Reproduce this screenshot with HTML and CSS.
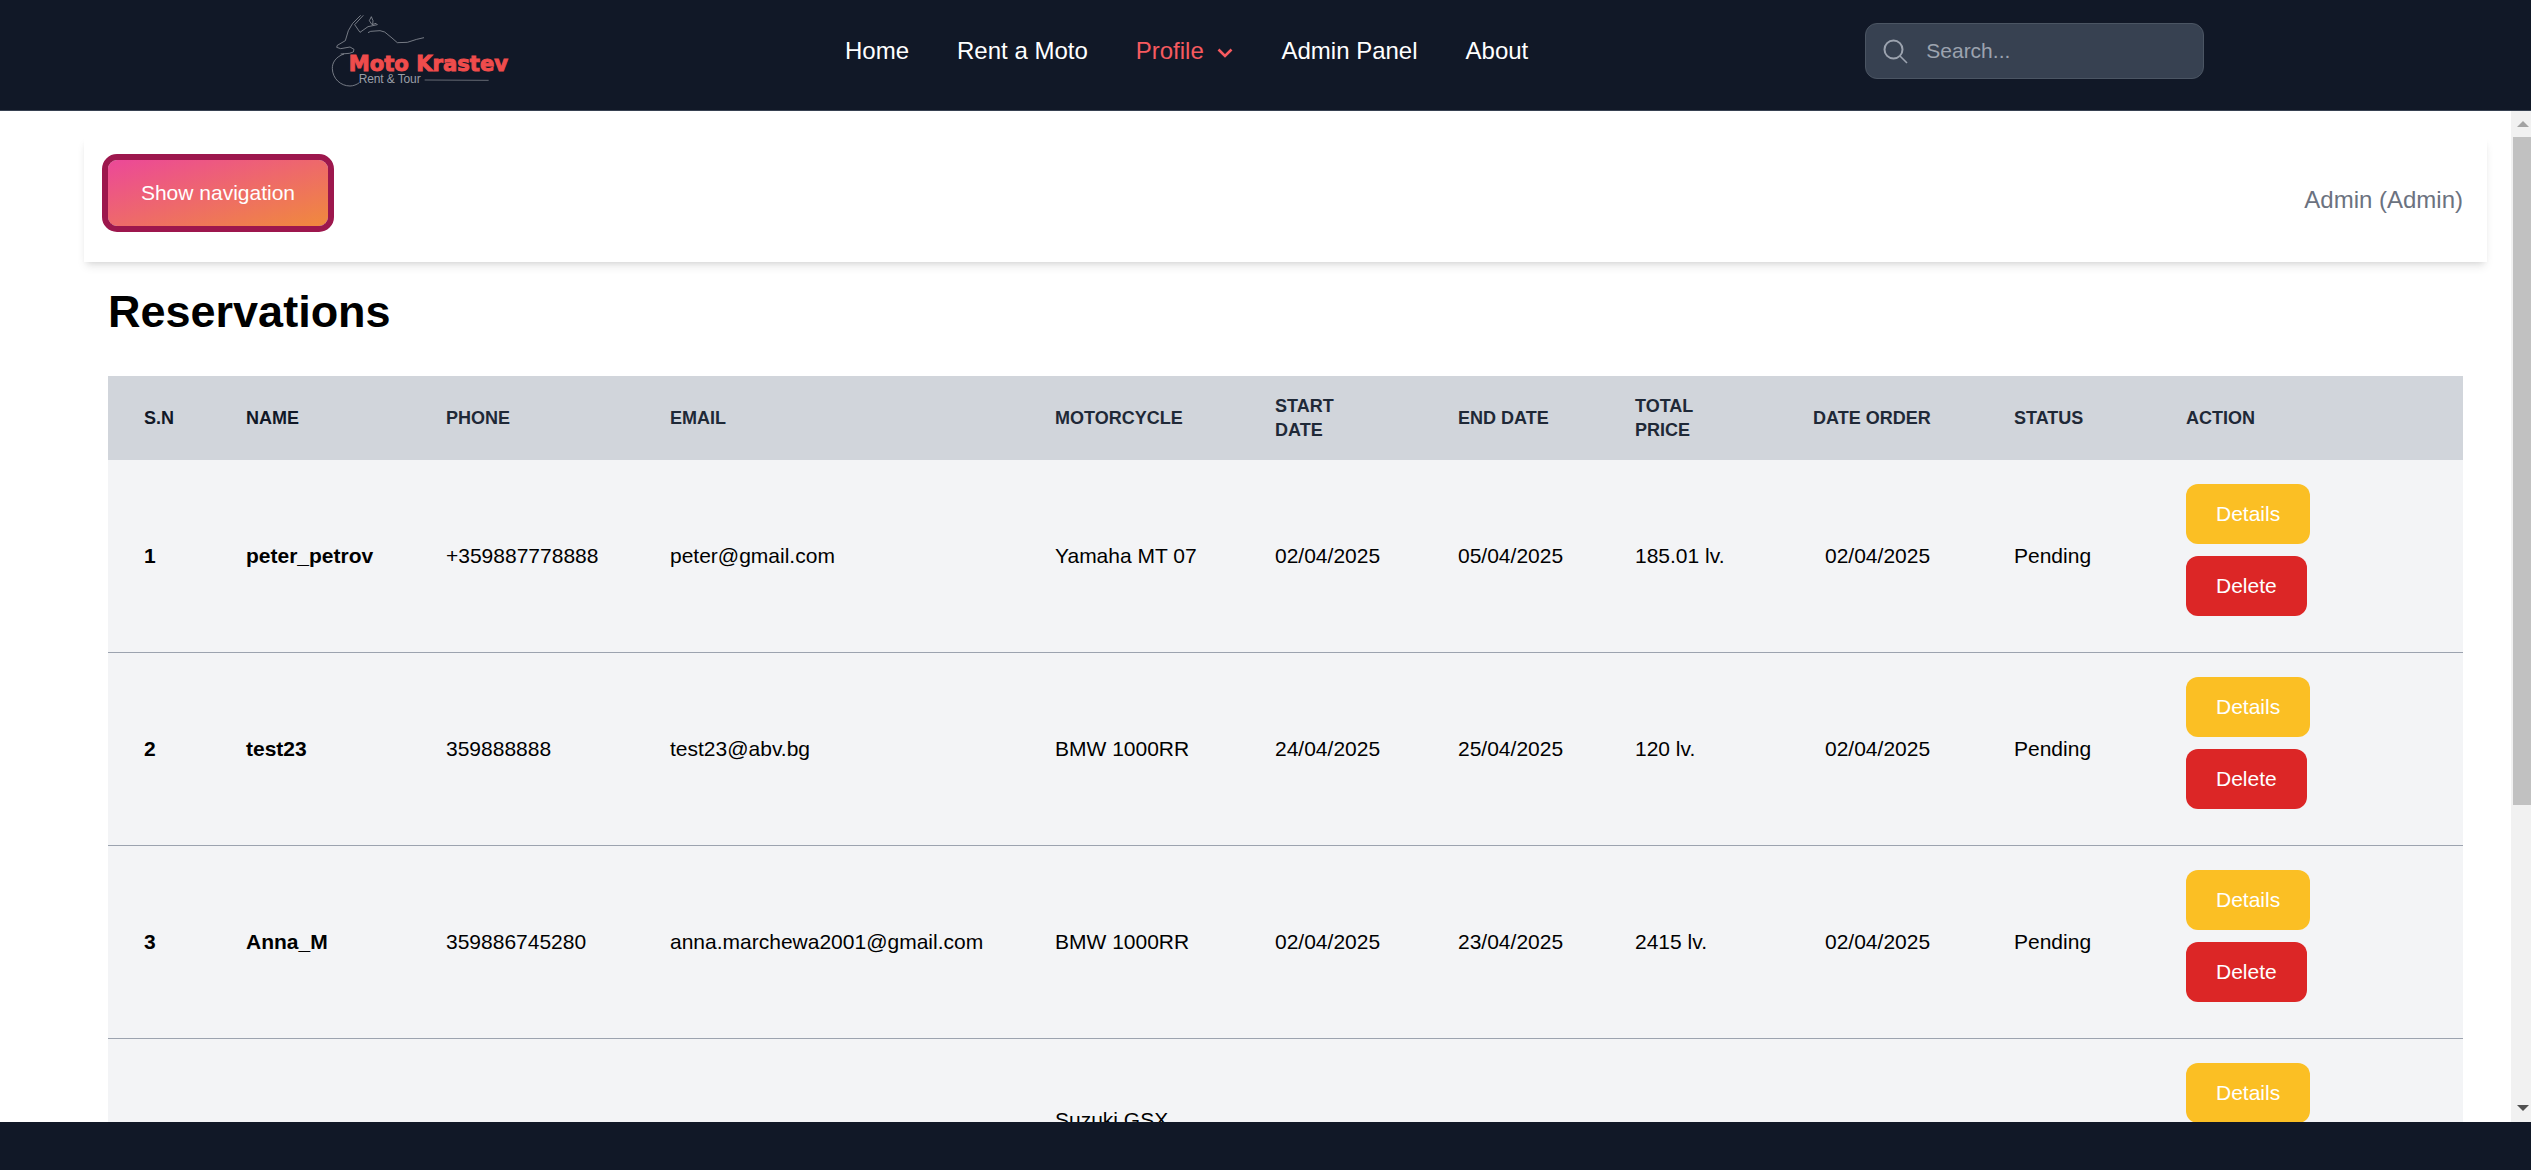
FILE: index.html
```html
<!DOCTYPE html>
<html>
<head>
    <meta charset="utf-8" />
    <title>Moto Krastev - Reservations</title>
    <link rel="stylesheet" href="styles.css">
</head>
<body class="page">
    <header class="topbar">
        <a class="logo" href="#">
            <svg class="logo-img" viewBox="0 0 780 330" width="260" height="110">
                <g fill="none" stroke="#9a9ea6" stroke-width="2.2">
                    <path d="M182 46 L158 70 L145 92 L136 122 L112 136 L110 142 L122 146 L150 141 L162 148 L160 156 L148 160 L122 162" />
                    <path d="M190 46 L164 74 L180 97 L204 80 L232 74 L228 70 L216 74 L208 62 L214 50 L219 62 L218 72" />
                    <path d="M204 98 L212 94 L240 92 L254 96 L276 114 L292 128 L322 127 L350 118 L372 113" />
                    <path d="M132 162 C108 170 96 188 97 206 C98 236 122 258 150 258 C160 258 170 254 178 248" />
                    <path d="M374 240 L566 241" stroke="#84878e" />
                </g>
                <text class="logo-name" x="146" y="213" textLength="478" lengthAdjust="spacingAndGlyphs">Moto Krastev</text>
                <text class="logo-tag" x="176" y="249" textLength="186">Rent &amp; Tour</text>
            </svg>
        </a>
        <nav class="menu">
            <a class="menu-link" href="#">Home</a>
            <a class="menu-link" href="#">Rent a Moto</a>
            <a class="menu-link menu-link-active" href="#">Profile
                <svg class="chevron" viewBox="0 0 16 10" width="16" height="10">
                    <path d="M1.5 1.5 L8 8 L14.5 1.5" fill="none" stroke="#f65a5f" stroke-width="2.6" />
                </svg>
            </a>
            <a class="menu-link" href="#">Admin Panel</a>
            <a class="menu-link" href="#">About</a>
        </nav>
        <form class="search" action="javascript:void(0);">
            <svg class="search-icon" viewBox="0 0 25 25" width="25" height="25">
                <circle cx="10.5" cy="10.5" r="9" fill="none" stroke="#9ca3af" stroke-width="2" />
                <path d="M17 17 L24 24" fill="none" stroke="#9ca3af" stroke-width="1.6" />
            </svg>
            <input class="search-input" type="text" placeholder="Search...">
        </form>
    </header>

    <div class="middle">
        <main class="content">
            <div class="toolbar">
                <button class="nav-toggle">Show navigation</button>
                <span class="user-name">Admin (Admin)</span>
            </div>

            <div class="section">
                <h1 class="title">Reservations</h1>
                <table class="orders">
                    <colgroup>
                        <col class="col-sn">
                        <col class="col-name">
                        <col class="col-phone">
                        <col class="col-email">
                        <col class="col-moto">
                        <col class="col-start">
                        <col class="col-end">
                        <col class="col-price">
                        <col class="col-order">
                        <col class="col-status">
                        <col class="col-action">
                    </colgroup>
                    <thead>
                        <tr>
                            <th class="dark">S.N</th>
                            <th class="dark">Name</th>
                            <th>Phone</th>
                            <th>Email</th>
                            <th>Motorcycle</th>
                            <th>Start Date</th>
                            <th>End Date</th>
                            <th>Total Price</th>
                            <th>Date Order</th>
                            <th>Status</th>
                            <th>Action</th>
                        </tr>
                    </thead>
                    <tbody>
                        <tr>
                            <td class="strong">1</td>
                            <td class="strong">peter_petrov</td>
                            <td>+359887778888</td>
                            <td>peter@gmail.com</td>
                            <td>Yamaha MT 07</td>
                            <td>02/04/2025</td>
                            <td>05/04/2025</td>
                            <td>185.01 lv.</td>
                            <td class="order-date">02/04/2025</td>
                            <td>Pending</td>
                            <td><a class="btn btn-details" href="#">Details</a><a class="btn btn-delete" href="#">Delete</a></td>
                        </tr>
                        <tr>
                            <td class="strong">2</td>
                            <td class="strong">test23</td>
                            <td>359888888</td>
                            <td>test23@abv.bg</td>
                            <td>BMW 1000RR</td>
                            <td>24/04/2025</td>
                            <td>25/04/2025</td>
                            <td>120 lv.</td>
                            <td class="order-date">02/04/2025</td>
                            <td>Pending</td>
                            <td><a class="btn btn-details" href="#">Details</a><a class="btn btn-delete" href="#">Delete</a></td>
                        </tr>
                        <tr>
                            <td class="strong">3</td>
                            <td class="strong">Anna_M</td>
                            <td>359886745280</td>
                            <td>anna.marchewa2001@gmail.com</td>
                            <td>BMW 1000RR</td>
                            <td>02/04/2025</td>
                            <td>23/04/2025</td>
                            <td>2415 lv.</td>
                            <td class="order-date">02/04/2025</td>
                            <td>Pending</td>
                            <td><a class="btn btn-details" href="#">Details</a><a class="btn btn-delete" href="#">Delete</a></td>
                        </tr>
                        <tr>
                            <td></td>
                            <td></td>
                            <td></td>
                            <td></td>
                            <td>Suzuki GSX<br>&nbsp;</td>
                            <td></td>
                            <td></td>
                            <td></td>
                            <td></td>
                            <td></td>
                            <td><a class="btn btn-details" href="#">Details</a><a class="btn btn-delete" href="#">Delete</a></td>
                        </tr>
                    </tbody>
                </table>
            </div>
        </main>

        <div class="scrollbar">
            <div class="scroll-btn"><span class="arrow-up"></span></div>
            <div class="scroll-track"><div class="scroll-thumb"></div></div>
            <div class="scroll-btn scroll-btn-down"><span class="arrow-down"></span></div>
        </div>
    </div>

    <footer class="bottombar"></footer>
</body>
</html>
```

FILE: styles.css
```css
* {
    box-sizing: border-box;
}

.page {
    margin: 0;
    height: 100vh;
    display: flex;
    flex-direction: column;
    overflow: hidden;
    font-family: "Liberation Sans", Arial, sans-serif;
    color: #000;
    background: #fff;
}

/* Top bar */
.topbar {
    flex: none;
    height: 111px;
    display: flex;
    align-items: center;
    padding: 0 0 8px 300px;
    background: #111827;
    border-bottom: 1px solid #374151;
}

.logo {
    display: block;
    align-self: flex-start;
    height: 110px;
    margin-right: 285px;
}

.logo-img {
    display: block;
}

.logo-name {
    font-family: "DejaVu Sans", sans-serif;
    font-size: 66px;
    font-weight: bold;
    fill: #ef4c4c;
    stroke: #ef4c4c;
    stroke-width: 3px;
}

.logo-tag {
    font-family: "Liberation Sans", sans-serif;
    font-size: 36px;
    fill: #9a9ea6;
}

.menu {
    display: flex;
    gap: 48px;
    margin-right: 337px;
}

.menu-link {
    font-size: 24px;
    line-height: 36px;
    color: #fff;
    text-decoration: none;
    white-space: nowrap;
}

.menu-link-active {
    color: #f65a5f;
}

.chevron {
    margin-left: 7px;
    vertical-align: 1px;
}

.search {
    width: 339px;
    height: 56px;
    display: flex;
    align-items: center;
    gap: 18px;
    padding-left: 17px;
    background: #374151;
    border: 1px solid #4b5563;
    border-radius: 12px;
}

.search-icon {
    flex: none;
}

.search-input {
    flex: 1;
    min-width: 0;
    padding: 0;
    border: 0;
    outline: 0;
    font: 21px "Liberation Sans", sans-serif;
    color: #fff;
    background: transparent;
}

.search-input::placeholder {
    color: #9ca3af;
    opacity: 1;
}

.middle {
    flex: 1;
    min-height: 0;
    display: flex;
}

.content {
    flex: 1;
    min-width: 0;
    overflow: hidden;
    padding: 26px 24px 0 84px;
}

.toolbar {
    height: 125px;
    display: flex;
    justify-content: space-between;
    align-items: flex-start;
    padding: 17px 24px 0 18px;
    background: #fff;
    box-shadow: 0 6px 9px -2px rgba(0, 0, 0, 0.1), 0 3px 6px -3px rgba(0, 0, 0, 0.1);
}

.nav-toggle {
    height: 78px;
    width: 232px;
    padding: 0;
    border: 6px solid #9d174d;
    border-radius: 15px;
    font: 21px "Liberation Sans", sans-serif;
    color: #fff;
    background: linear-gradient(to bottom right, #ec4899, #f08a3c) padding-box;
}

.user-name {
    margin-top: 28px;
    font-size: 24px;
    line-height: 36px;
    color: #6b7280;
}

.section {
    padding: 0 24px;
}

.title {
    margin: 23px 0 37px;
    font-size: 45px;
    line-height: 54px;
    font-weight: bold;
}

/* Reservations table */
.orders {
    width: 2355px;
    table-layout: fixed;
    border-collapse: collapse;
    font-size: 21px;
    line-height: 30px;
}

.col-sn { width: 102px; }
.col-name { width: 200px; }
.col-phone { width: 224px; }
.col-email { width: 385px; }
.col-moto { width: 220px; }
.col-start { width: 183px; }
.col-end { width: 177px; }
.col-price { width: 178px; }
.col-order { width: 201px; }
.col-status { width: 172px; }
.col-action { width: 313px; }

.orders th {
    padding: 18px 36px;
    font-size: 18px;
    line-height: 24px;
    font-weight: bold;
    text-align: left;
    text-transform: uppercase;
    color: #1f2937;
    background: #d1d5db;
}

.orders th.dark {
    color: #111827;
}

.orders td {
    padding: 24px 36px;
    background: #f3f4f6;
    border-bottom: 1px solid #9ca3af;
}

.orders td.strong {
    font-weight: bold;
}

.orders td.order-date {
    padding-left: 48px;
    white-space: nowrap;
}

.btn {
    display: block;
    width: max-content;
    height: 60px;
    margin-bottom: 12px;
    padding: 15px 30px;
    border-radius: 12px;
    color: #fff;
    text-decoration: none;
}

.btn-details {
    background: #fbbf24;
}

.btn-delete {
    background: #dc2626;
}

/* Fake scrollbar */
.scrollbar {
    flex: none;
    width: 20px;
    display: flex;
    flex-direction: column;
    background: #f1f1f1;
}

.scroll-btn {
    flex: none;
    height: 26px;
    display: flex;
    justify-content: center;
    align-items: center;
    padding-left: 4px;
}

.scroll-btn-down {
    height: 28px;
}

.arrow-up {
    border-left: 6px solid transparent;
    border-right: 6px solid transparent;
    border-bottom: 6px solid #a3a3a3;
}

.arrow-down {
    border-left: 6px solid transparent;
    border-right: 6px solid transparent;
    border-top: 6px solid #505050;
}

.scroll-track {
    flex: 1;
    padding-left: 2px;
}

.scroll-thumb {
    height: 668px;
    background: #c1c1c1;
}

.bottombar {
    flex: none;
    height: 48px;
    background: #111827;
}
```
